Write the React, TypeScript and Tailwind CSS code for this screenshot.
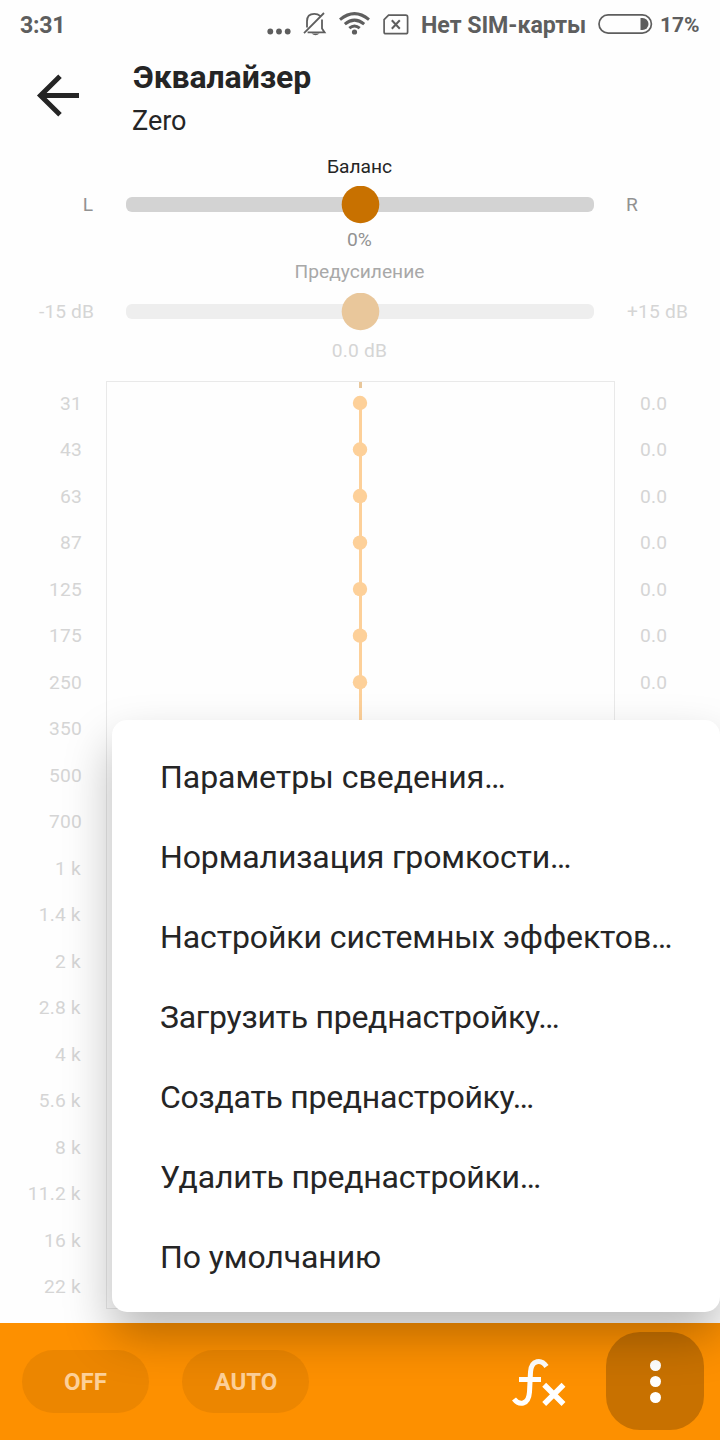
const BANDS = ["31","43","63","87","125","175","250","350","500","700","1 k","1.4 k","2 k","2.8 k","4 k","5.6 k","8 k","11.2 k","16 k","22 k"];
const GAINS = ["0.0","0.0","0.0","0.0","0.0","0.0","0.0"];
const MENU = [
  { label: "Параметры сведения…", tracking: "tracking-[-0.05px]" },
  { label: "Нормализация громкости…", tracking: "tracking-[-0.13px]" },
  { label: "Настройки системных эффектов…", tracking: "tracking-[-0.1px]" },
  { label: "Загрузить преднастройку…", tracking: "tracking-[-0.27px]" },
  { label: "Создать преднастройку…", tracking: "tracking-[-0.28px]" },
  { label: "Удалить преднастройки…", tracking: "tracking-[-0.22px]" },
  { label: "По умолчанию", tracking: "tracking-[-0.1px]" },
];

function StatusBar() {
  return (
    <div className="flex h-[50px] shrink-0 items-center pl-5 pr-[20px] text-[23.2px] font-bold leading-[50px] text-[#5e5e5e]">
      <span className="w-[246px] tracking-[-0.3px]">3:31</span>
      <svg className="h-[50px] w-[146px] shrink-0" viewBox="266 0 146 50" fill="none" stroke="#5e5e5e">
        <g fill="#5e5e5e" stroke="none">
          <circle cx="270.3" cy="31.5" r="2.9" />
          <circle cx="279" cy="31.5" r="2.9" />
          <circle cx="287.7" cy="31.5" r="2.9" />
          <circle cx="354.5" cy="32" r="2.6" />
          <path d="M311.5 33.5h8q-4 3.5-8 0z" />
        </g>
        <path d="M304 33.2L324 13M322 19.5v9l2.6 3.9H307.6M307 27.5v-6.3q0-7.3 7.3-7.3q3.6 0 5.8 2" strokeWidth="1.8" />
        <path d="M340 19.6q14.5-12 29 0M344.8 24.1q9.7-8 19.4 0M349.3 28.2q5.2-4.4 10.4 0" strokeWidth="3" />
        <path d="M388.6 15.2h17.2q1.8 0 1.8 1.8v14.9q0 1.8-1.8 1.8h-19.9q-1.8 0-1.8-1.8v-12.2z" strokeWidth="1.7" />
        <path d="M391.8 20.3l8 8.5M399.8 20.3l-8 8.5" strokeWidth="2" />
      </svg>
      <span className="ml-[9px] w-[176px] whitespace-nowrap tracking-[-0.05px]">Нет SIM-карты</span>
      <svg className="h-[50px] w-[56px] shrink-0" viewBox="597 0 56 50">
        <rect x="599" y="14.9" width="52.4" height="18.2" rx="9.1" fill="none" stroke="#5e5e5e" strokeWidth="1.7" />
        <path d="M640.5 18h2a6 6 0 0 1 0 12h-2z" fill="#5e5e5e" />
      </svg>
      <span className="ml-[7px] text-[21px]">17%</span>
    </div>
  );
}

function Slider({ title, left, right, value, dim }: { title: string; left: string; right: string; value: string; dim?: boolean }) {
  return (
    <section className="text-[19.2px] text-[#929292]">
      <div className={dim ? "pr-px text-center leading-6 text-[#a8a8a8]" : "pr-px text-center leading-6 text-[#252525]"}>{title}</div>
      <div className={dim ? "flex h-[55px] items-center text-[#d5d5d5]" : "flex h-[51px] items-center"}>
        <span className={dim ? "w-[94px] pt-[2px] text-right tracking-[0.1px]" : "w-[93px] pt-[2px] text-right"}>{left}</span>
        <div className={dim ? "ml-8 flex h-[15px] w-[468px] items-center justify-center rounded-[6px] bg-[#eeeeee]" : "ml-[33px] flex h-[15px] w-[468px] items-center justify-center rounded-[6px] bg-[#d3d3d3]"}>
          <svg className="h-[38px] w-[40px] shrink-0" viewBox="340 0 40 38">
            <circle cx="360.5" cy="18.5" r="18.8" fill={dim ? "#e9c79b" : "#c87100"} />
          </svg>
        </div>
        <span className={dim ? "ml-[33px] pt-[2px] tracking-[0.2px]" : "ml-8 pt-[2px]"}>{right}</span>
      </div>
      <div className={dim ? "pr-px text-center leading-6 tracking-[0.2px] text-[#d5d5d5]" : "pr-px text-center leading-5"}>{value}</div>
    </section>
  );
}

export default function App() {
  return (
    <div className="relative flex h-[1440px] w-[720px] flex-col overflow-hidden bg-[#fefefe] font-['Roboto',sans-serif]">
      <StatusBar />
      <header className="flex h-[105px] shrink-0">
        <svg className="ml-[36px] mt-[22px] h-[48px] w-[46px]" viewBox="36 72 46 48" fill="none" stroke="#252525" strokeWidth="5">
          <path d="M79 95.5H40M60 76.2L40.5 95.5L60 114.8" />
        </svg>
        <div className="ml-[51px] text-[#252525]">
          <h1 className="mt-[7px] text-[32px] font-bold leading-10 tracking-[-0.1px]">Эквалайзер</h1>
          <p className="-ml-px mt-[6px] text-[27px] leading-9">Zero</p>
        </div>
      </header>
      <div className="h-[105px] shrink-0"><Slider title="Баланс" left="L" right="R" value="0%" /></div>
      <div className="h-[120px] shrink-0"><Slider title="Предусиление" left="-15 dB" right="+15 dB" value="0.0 dB" dim /></div>
      <main className="flex h-[943px] shrink-0 text-[19.2px] tracking-[0.2px] text-[#d5d5d5]">
        <div className="mt-[0.8px] grid h-[931px] w-[82px] grid-rows-[repeat(20,46.53px)] items-center text-right">
          {BANDS.map((b) => <span key={b} className={b.endsWith("k") ? "pr-[1.2px]" : ""}>{b}</span>)}
        </div>
        <div className="ml-[24px] mt-px h-[928px] w-[509px] border border-[#e9e9e9]">
          <svg className="h-[926px] w-[507px]" viewBox="107 382 507 926">
            <path d="M360.5 382v6" stroke="#e9c79b" strokeWidth="3" />
            <path d="M360.5 403V1290" stroke="#fdd099" strokeWidth="3" />
            {BANDS.map((b, i) => <circle key={b} cx="360" cy={403 + i * 46.53} r="7.2" fill="#fdd099" />)}
          </svg>
        </div>
        <div className="ml-[25px] mt-[0.8px] grid h-[326px] grid-rows-[repeat(7,46.53px)] items-center">
          {GAINS.map((g, i) => <span key={i}>{g}</span>)}
        </div>
      </main>
      <footer className="flex h-[117px] shrink-0 items-center bg-[#fd9000] text-[24px] font-bold text-[#fdd099]">
        <div className="ml-[22.4px] flex h-[63px] w-[127px] items-center justify-center rounded-full bg-[#ec8600] pr-px">OFF</div>
        <div className="ml-[33px] flex h-[63px] w-[127px] items-center justify-center rounded-full bg-[#ec8600]">AUTO</div>
        <svg className="ml-[198.6px] h-[54px] w-[60px]" viewBox="508 1354 60 54" fill="none" stroke="#fff">
          <path d="M546.5 1365.5C541.5 1358 531.3 1358.5 530.5 1371L529.5 1391C528.5 1404.5 519 1404.5 514 1398M519 1378.5h22" strokeWidth="5" />
          <path d="M544.2 1383.8L563.5 1403M563.5 1383.8L544.2 1403" strokeWidth="5.5" />
        </svg>
        <div className="-mt-px ml-[38.5px] flex size-[98px] flex-col items-center justify-center gap-[5px] rounded-[34px] bg-[#c87100]">
          <i className="size-[11px] rounded-full bg-white" /><i className="size-[11px] rounded-full bg-white" /><i className="size-[11px] rounded-full bg-white" />
        </div>
      </footer>
      <div className="absolute left-[112px] top-[720px] h-[592px] w-[608px] rounded-[15px] bg-white pl-12 pt-[17px] text-[32px] text-[#252525] shadow-[0_24px_48px_rgba(0,0,0,0.27)]">
        {MENU.map((m) => (
          <div key={m.label} className={`h-20 whitespace-nowrap leading-[80px] ${m.tracking}`}>{m.label}</div>
        ))}
      </div>
    </div>
  );
}
